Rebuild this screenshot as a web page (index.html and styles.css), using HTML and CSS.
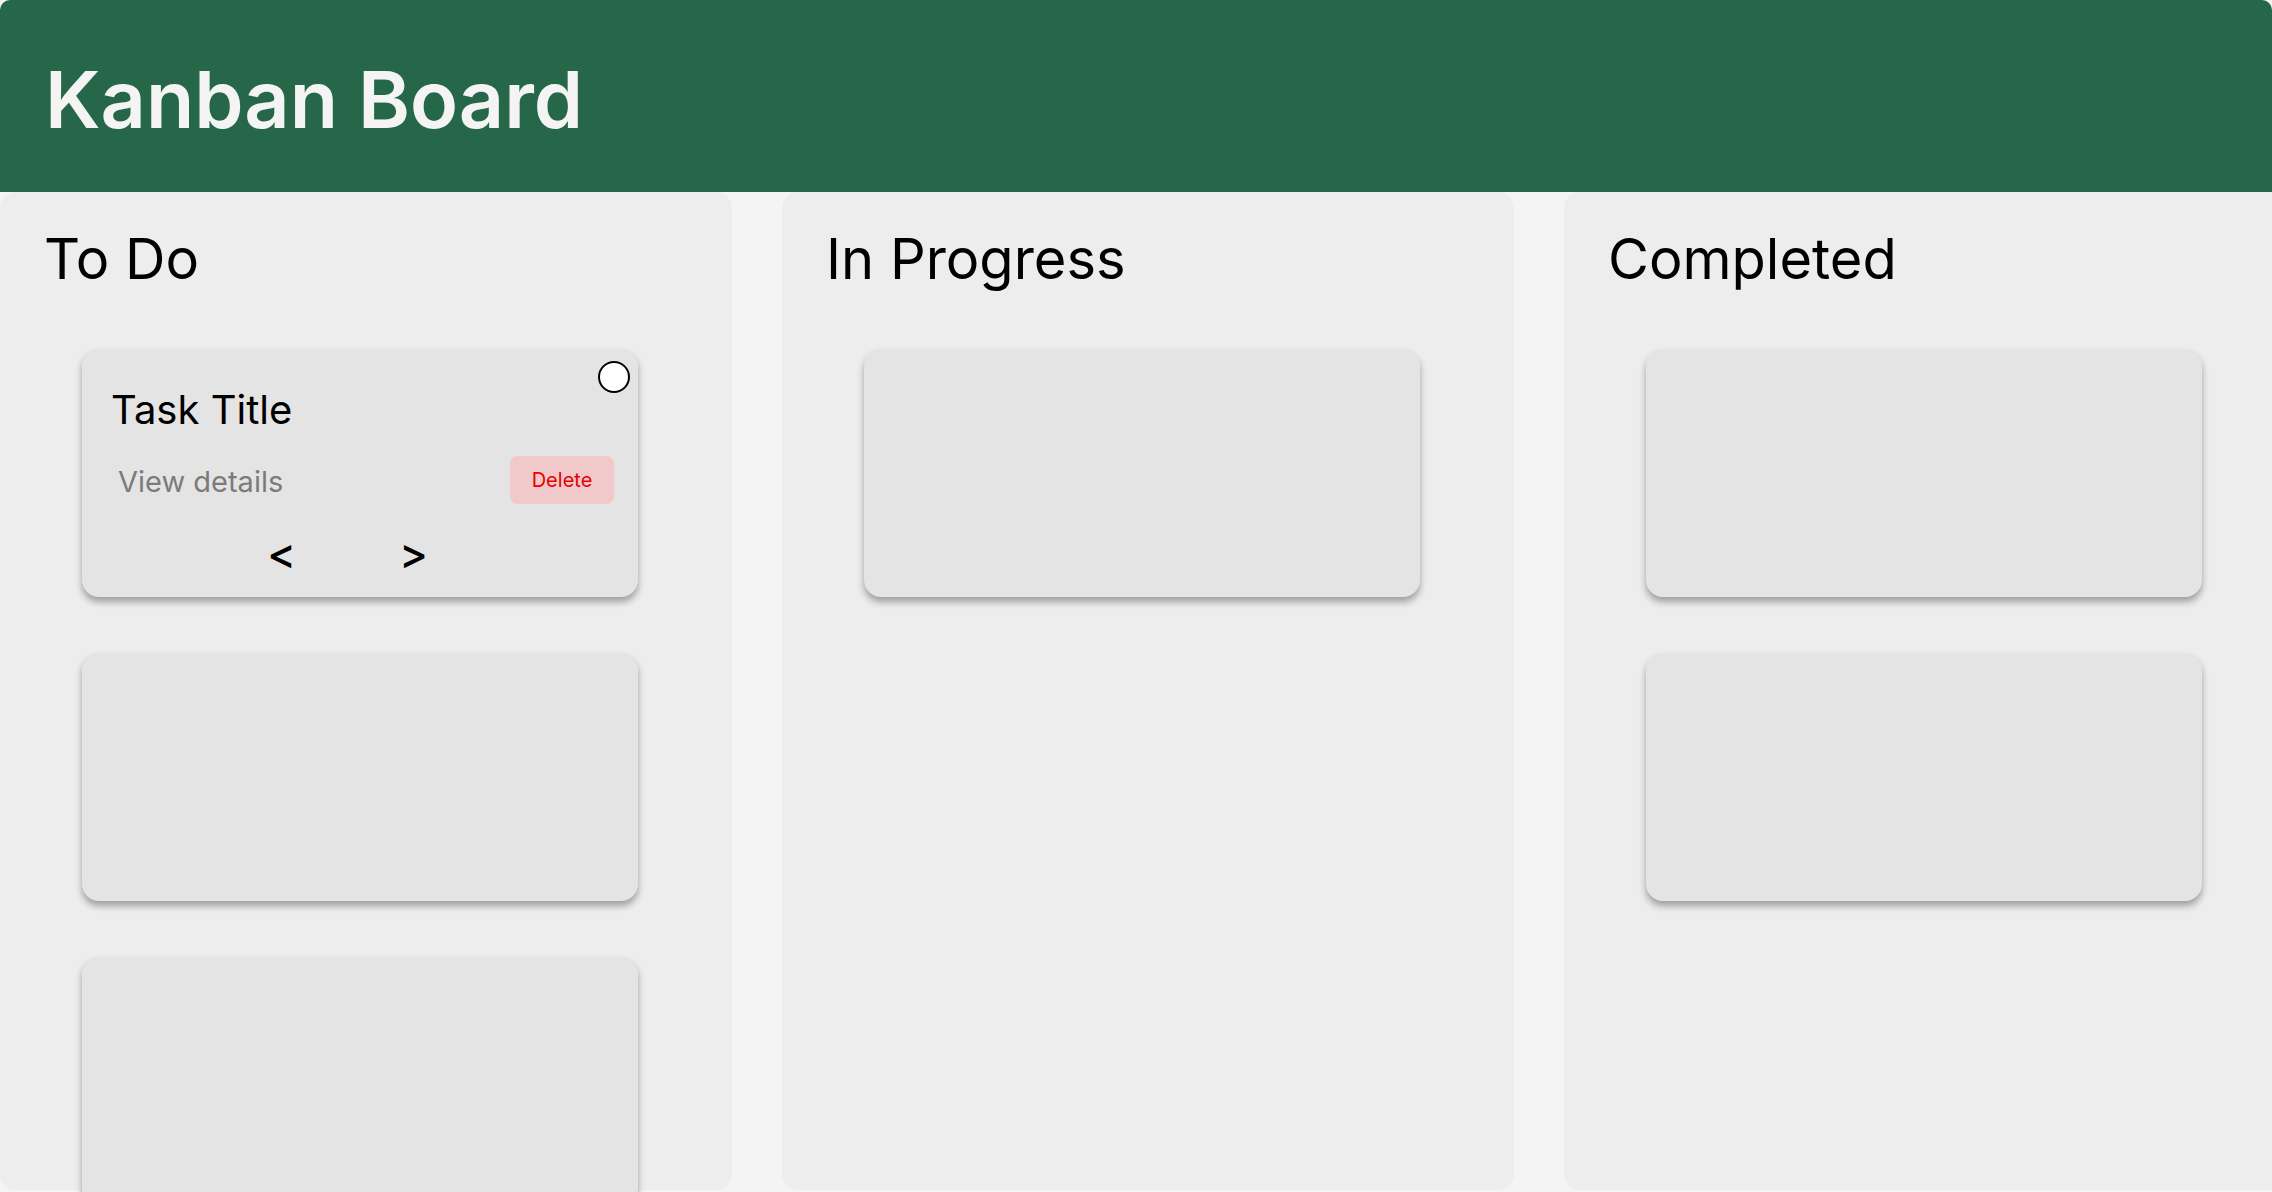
FILE: index.html
```html
<!DOCTYPE html>
<html lang="en">
<head>
<meta charset="utf-8">
<title>Kanban Board</title>
<link rel="stylesheet" href="styles.css">
</head>
<body>
<header class="app-header">
  <h1 class="app-title">Kanban Board</h1>
</header>
<main class="board">
  <section class="column">
    <h2 class="column-title">To Do</h2>
    <div class="card-list">
      <article class="card">
        <span class="card-check"></span>
        <h3 class="card-title">Task Title</h3>
        <div class="card-row">
          <a class="card-link">View details</a>
          <button class="btn-delete">Delete</button>
        </div>
        <div class="card-nav">
          <button class="btn-move">&lt;</button>
          <button class="btn-move">&gt;</button>
        </div>
      </article>
      <article class="card"></article>
      <article class="card"></article>
    </div>
  </section>
  <section class="column">
    <h2 class="column-title">In Progress</h2>
    <div class="card-list">
      <article class="card"></article>
    </div>
  </section>
  <section class="column">
    <h2 class="column-title">Completed</h2>
    <div class="card-list">
      <article class="card"></article>
      <article class="card"></article>
    </div>
  </section>
</main>
</body>
</html>
```

FILE: styles.css
```css
* { box-sizing: border-box; }

html, body {
  margin: 0;
  padding: 0;
  overflow: hidden;
}

body {
  background: #f4f4f4;
  font-family: Inter, "Noto Sans", "Liberation Sans", sans-serif;
  color: #000;
  width: 2272px;
  height: 1192px;
}

.app-header {
  height: 192px;
  background: #276749;
  border-radius: 10px 10px 0 0;
  padding: 51px 0 0 45px;
}

.app-title {
  margin: 0;
  font-size: 79px;
  line-height: 97px;
  font-weight: 600;
  color: #f4f4f4;
}

.board {
  display: flex;
  gap: 50px;
  overflow: hidden;
  height: 1000px;
}

.column {
  flex: 0 0 732px;
  height: 998px;
  background: #ededed;
  border-radius: 16px;
  padding-top: 33px;
}

.column-title {
  margin: 0;
  padding-left: 44px;
  font-size: 56px;
  line-height: 68px;
  font-weight: 400;
}

.card-list {
  display: flex;
  flex-direction: column;
  gap: 56px;
  margin-top: 56px;
  padding-left: 82px;
}

.card {
  position: relative;
  width: 556px;
  height: 248px;
  flex: 0 0 auto;
  background: #e4e4e4;
  border-radius: 17px;
  box-shadow: 0 5px 7px rgba(0, 0, 0, 0.33);
  padding: 37px 24px 0 29px;
}

.card-check {
  position: absolute;
  top: 12px;
  right: 8px;
  width: 32px;
  height: 32px;
  border: 2px solid #000;
  border-radius: 50%;
  background: #fff;
}

.card-title {
  margin: 0;
  font-size: 40px;
  line-height: 48px;
  font-weight: 400;
}

.card-row {
  display: flex;
  justify-content: space-between;
  align-items: center;
  height: 48px;
  margin-top: 22px;
}

.card-link {
  padding: 4px 0 0 7px;
  font-size: 29px;
  line-height: 34px;
  color: #7b7b7b;
}

.btn-delete {
  width: 104px;
  height: 48px;
  border: 0;
  border-radius: 8px;
  background: #f2c9ca;
  color: #e60000;
  font-family: inherit;
  font-size: 20px;
  padding: 0;
}

.card-nav {
  display: flex;
  justify-content: center;
  gap: 90px;
  height: 40px;
  margin-top: 29px;
  padding-right: 30px;
}

.btn-move {
  width: 42px;
  height: 40px;
  padding: 0;
  border: 0;
  background: transparent;
  font-family: inherit;
  font-size: 43px;
  line-height: 40px;
  font-weight: 500;
  color: #000;
}
```
